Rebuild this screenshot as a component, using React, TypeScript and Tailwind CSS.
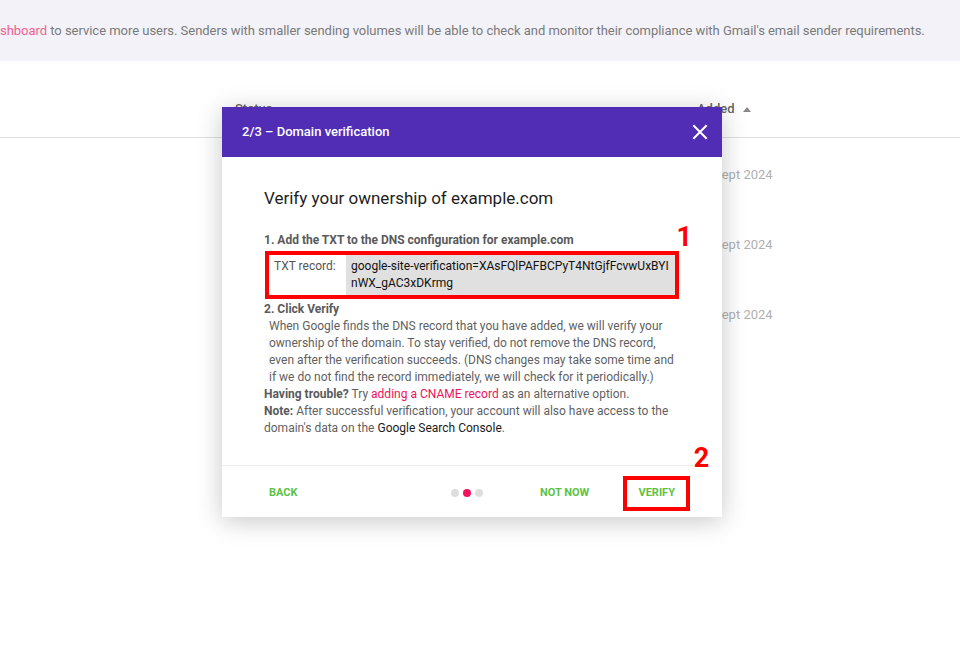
import React from "react";

export default function App() {
  const font = { fontFamily: "Roboto, 'Liberation Sans', sans-serif" };
  return (
    <div className="relative w-[960px] h-[659px] bg-white overflow-hidden" style={font}>
      {/* banner */}
      <div className="h-[61px] bg-[#f3f2f8] flex items-center text-[13px] tracking-[-0.03px] text-[#7a7a7a] whitespace-nowrap pt-[1px]">
        <span className="text-[#f06292]">shboard</span>
        <span>&nbsp;to service more users. Senders with smaller sending volumes will be able to check and monitor their compliance with Gmail's email sender requirements.</span>
      </div>

      {/* table */}
      <div className="h-[77px] border-b border-[#e0e0e0] flex items-center pt-[20px] text-[13px] font-medium text-[#666]">
        <div className="w-[235px]" />
        <div className="w-[462px]">Status</div>
        <div className="flex items-center gap-[8px]">
          <span>Added</span>
          <svg width="8" height="5" viewBox="0 0 8 5"><path d="M0 5 L4 0 L8 5 Z" fill="#888" /></svg>
        </div>
      </div>
      <div className="flex flex-col text-[13px] text-[#b0b0b0]">
        {[0, 1, 2].map((i) => (
          <div key={i} className="h-[70px] flex items-center pl-[714px] pt-[4px]">
            Sept 2024
          </div>
        ))}
      </div>

      {/* modal */}
      <div className="absolute left-[222px] top-[107px] w-[500px] bg-white shadow-[0_4px_24px_rgba(0,0,0,0.22)]">
        <div className="h-[50px] bg-[#512db5] flex items-center justify-between pl-[20px] pr-[11px]">
          <span className="text-white text-[13px] font-medium">2/3 – Domain verification</span>
          <svg width="22" height="22" viewBox="0 0 24 24" fill="none" stroke="white" strokeWidth="2.2" strokeLinecap="square">
            <path d="M5.5 5.5 L18.5 18.5 M18.5 5.5 L5.5 18.5" />
          </svg>
        </div>

        <div className="pt-[30px] pb-[28px] pl-[42px] pr-[43px]">
          <div className="text-[17px] leading-[22px] text-[#1d1d1d]">Verify your ownership of example.com</div>
          <div className="mt-[23px] text-[12px] leading-[17px] font-bold text-[#5a5a5a]">
            1. Add the TXT to the DNS configuration for example.com
          </div>
          <div className="relative mt-[2px] ml-[1px] border-[4px] border-[#ff0000] flex text-[12px] leading-[17px]">
            <div className="w-[77px] shrink-0 pl-[5px] pt-[3px] text-[#555]">TXT record:</div>
            <div className="flex-1 bg-[#e0e0e0] pl-[5px] pr-[2px] pt-[3px] pb-[3px] text-[#111] break-all">
              google-site-verification=XAsFQlPAFBCPyT4NtGjfFcvwUxBYInWX_gAC3xDKrmg
            </div>
            <div className="absolute right-[-17px] top-[-33px] text-[27px] leading-[30px] font-bold text-[#ff0000]">1</div>
          </div>
          <div className="mt-[2px] text-[12px] leading-[17px] font-bold text-[#5a5a5a]">2. Click Verify</div>
          <div className="ml-[5px] text-[12px] leading-[17px] text-[#5f5f5f]">
            When Google finds the DNS record that you have added, we will verify your ownership of the domain. To stay verified, do not remove the DNS record, even after the verification succeeds. (DNS changes may take some time and if we do not find the record immediately, we will check for it periodically.)
          </div>
          <div className="text-[12px] leading-[17px] text-[#5f5f5f]">
            <span className="font-bold text-[#5a5a5a]">Having trouble?</span> Try{" "}
            <span className="text-[#f0145a]">adding a CNAME record</span> as an alternative option.
          </div>
          <div className="text-[12px] leading-[17px] text-[#5f5f5f]">
            <span className="font-bold text-[#5a5a5a]">Note:</span> After successful verification, your account will also have access to the domain's data on the{" "}
            <span className="text-[#1a1a1a]">Google Search Console</span>.
          </div>
        </div>

        <div className="mr-[10px] border-t border-[#eeeeee]" />
        <div className="h-[51px] flex items-center text-[11px] font-bold text-[#5cc246] uppercase pt-[3px]">
          <div className="pl-[47px] w-[229px]">Back</div>
          <div className="flex items-center gap-[4px]">
            <span className="w-[8px] h-[8px] rounded-full bg-[#dddddd]" />
            <span className="w-[8px] h-[8px] rounded-full bg-[#f0145a]" />
            <span className="w-[8px] h-[8px] rounded-full bg-[#dddddd]" />
          </div>
          <div className="ml-[57px]">Not now</div>
          <div className="relative ml-[34px] w-[67px] h-[35px] border-[4px] border-[#ff0000] flex items-center justify-center">
            Verify
            <div className="absolute right-[-23px] top-[-37px] text-[27px] leading-[30px] font-bold text-[#ff0000] normal-case">2</div>
          </div>
        </div>
      </div>
    </div>
  );
}
